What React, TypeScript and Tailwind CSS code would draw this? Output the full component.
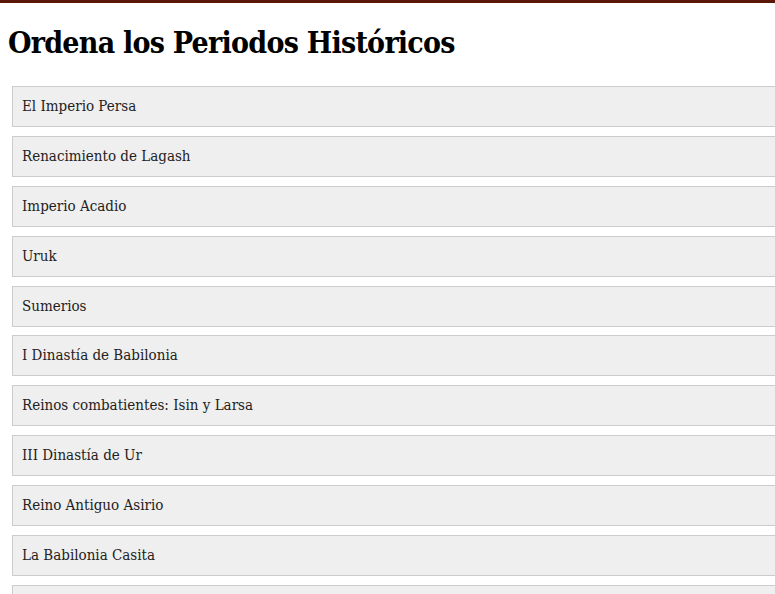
const periods = [
  "El Imperio Persa",
  "Renacimiento de Lagash",
  "Imperio Acadio",
  "Uruk",
  "Sumerios",
  "I Dinastía de Babilonia",
  "Reinos combatientes: Isin y Larsa",
  "III Dinastía de Ur",
  "Reino Antiguo Asirio",
  "La Babilonia Casita",
  "Imperio Neobabilónico",
];

export default function App() {
  return (
    <div
      className="h-[594px] w-[775px] overflow-hidden bg-white text-black"
      style={{ fontFamily: '"DejaVu Serif Condensed", "DejaVu Serif", serif' }}
    >
      {/* Top bar */}
      <div className="h-[3px] bg-[#5a1606]" />

      <div className="px-2">
        <h1 className="mt-[18px] mb-[21px] text-[30px] font-bold leading-[44px] tracking-[-0.75px]">
          Ordena los Periodos Históricos
        </h1>

        {/* Sortable list */}
        <ul className="ml-1 flex w-[calc(100%+20px)] flex-col gap-[8.9px]">
          {periods.map((p) => (
            <li
              key={p}
              className="border border-[#cccccc] bg-[#efefef] px-[9px] py-[10px] text-[15px] leading-[19px] text-[#222]"
            >
              {p}
            </li>
          ))}
        </ul>
      </div>
    </div>
  );
}
